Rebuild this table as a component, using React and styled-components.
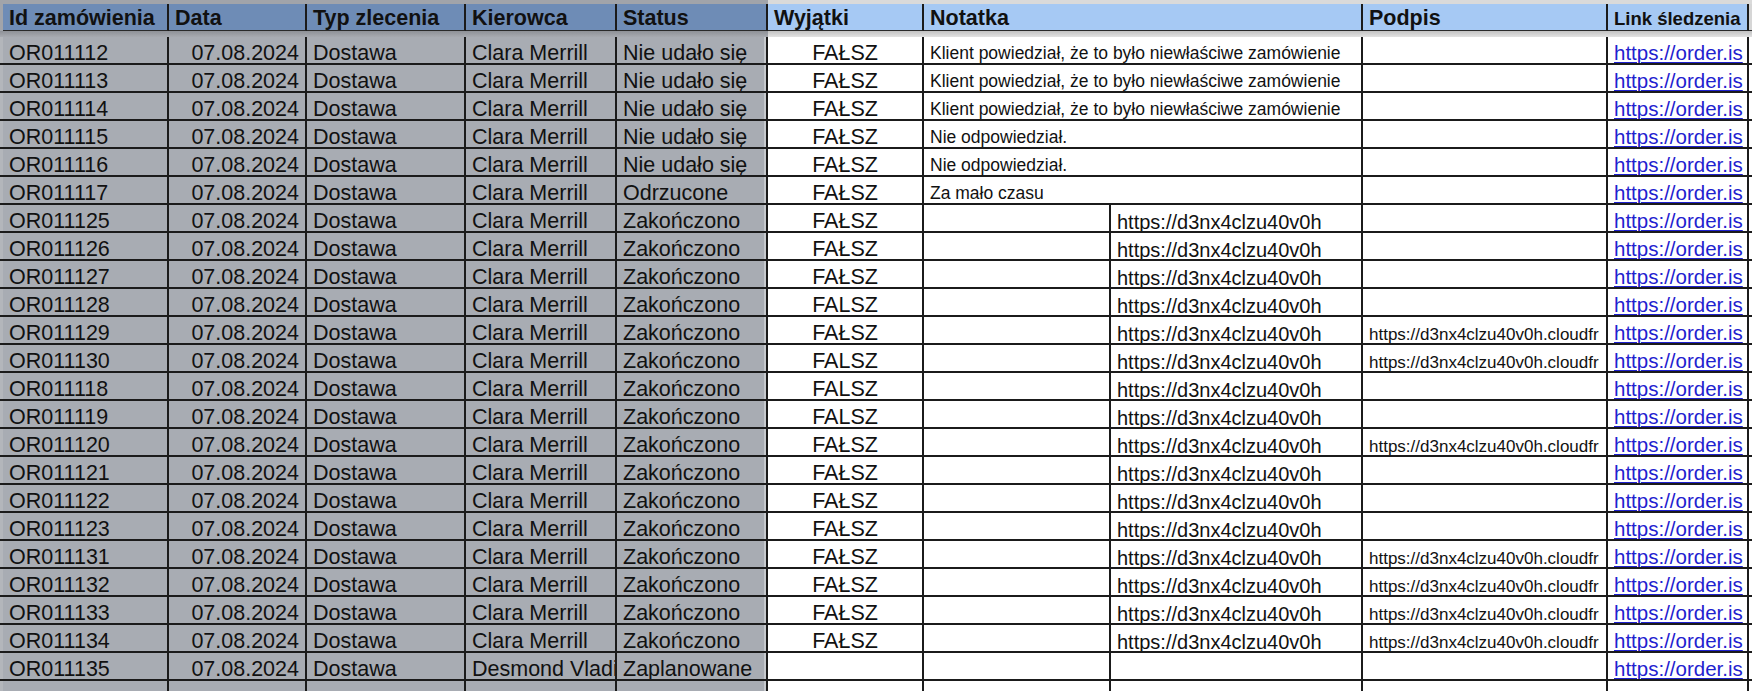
import React from 'react'
import styled, { createGlobalStyle } from 'styled-components'

const GlobalStyle = createGlobalStyle`
  html, body {
    margin: 0;
    padding: 0;
    background: #fff;
  }
`

const LINE = '#1b1b1b'

const Sheet = styled.div`
  display: grid;
  grid-template-columns: 3px 166px 138px 159px 151px 151px 156px 187px 252px 245px 141px 1fr;
  grid-template-rows: 4px 27px 6px;
  grid-auto-rows: 28px;
  width: 1752px;
  height: 691px;
  overflow: hidden;
  font-family: "Liberation Sans", Arial, sans-serif;
  color: #111;
`

const Band = styled.div`
  grid-column: span ${p => p.$span};
  background: ${p => p.$dim ? '#a1a4aa' : '#dadada'};
`

const Divider = styled.div`
  grid-column: span ${p => p.$span};
  background: ${p => p.$dim
    ? 'linear-gradient(#8e9197, #a7aab0)'
    : 'linear-gradient(#c2c2c2, #e2e2e2)'};
`

const HeadCell = styled.div`
  display: flex;
  align-items: flex-end;
  grid-column: span ${p => p.$span || 1};
  min-width: 0;
  overflow: hidden;
  white-space: nowrap;
  padding: 0 6px 2px;
  font-size: ${p => p.$size || 21.5}px;
  font-weight: 700;
  line-height: 0.9;
  background: ${p => p.$dim ? '#6e8cb6' : '#a6c9f4'};
  border-right: 2px solid ${LINE};
  border-bottom: 1px solid #2a2a2a;
`

const Gutter = styled.div`
  background: ${p => p.$dim ? '#b3b6bb' : '#e4e4e4'};
  border-bottom: 2px solid ${LINE};
`

const Tail = styled.div`
  background: ${p => p.$head ? '#d6d6d6' : '#fff'};
  border-bottom: ${p => p.$head ? '1px solid #2a2a2a' : `2px solid ${LINE}`};
`

const justify = { left: 'flex-start', right: 'flex-end', center: 'center' }

const Cell = styled.div`
  display: flex;
  align-items: flex-end;
  justify-content: ${p => justify[p.$align || 'left']};
  grid-column: span ${p => p.$span || 1};
  min-width: 0;
  overflow: hidden;
  white-space: nowrap;
  padding: 0 6px ${p => p.$lift || 0}px;
  font-size: ${p => p.$size || 21.5}px;
  line-height: 0.9;
  background: ${p => p.$dim ? '#a8acb3' : '#fff'};
  border-right: 2px solid ${LINE};
  border-bottom: 2px solid ${LINE};
  box-shadow: ${p => p.$edge ? 'inset -2px 0 0 rgba(255,255,255,0.35)' : 'none'};
`

const Link = styled.a`
  color: #1f22cf;
  text-decoration: underline;
  text-decoration-thickness: 1px;
  text-underline-offset: 2px;
`

const KLIENT = 'Klient powiedział, że to było niewłaściwe zamówienie'
const NIE = 'Nie odpowiedział.'
const URL = 'https://d3nx4clzu40v0h'
const SIGN = 'https://d3nx4clzu40v0h.cloudfr'

const rows = [
  { id: 'OR011112', status: 'Nie udało się', exc: 'FAŁSZ', note: KLIENT },
  { id: 'OR011113', status: 'Nie udało się', exc: 'FAŁSZ', note: KLIENT },
  { id: 'OR011114', status: 'Nie udało się', exc: 'FAŁSZ', note: KLIENT },
  { id: 'OR011115', status: 'Nie udało się', exc: 'FAŁSZ', note: NIE },
  { id: 'OR011116', status: 'Nie udało się', exc: 'FAŁSZ', note: NIE },
  { id: 'OR011117', status: 'Odrzucone', exc: 'FAŁSZ', note: 'Za mało czasu' },
  { id: 'OR011125', status: 'Zakończono', exc: 'FAŁSZ', url: URL },
  { id: 'OR011126', status: 'Zakończono', exc: 'FAŁSZ', url: URL },
  { id: 'OR011127', status: 'Zakończono', exc: 'FAŁSZ', url: URL },
  { id: 'OR011128', status: 'Zakończono', exc: 'FALSZ', url: URL },
  { id: 'OR011129', status: 'Zakończono', exc: 'FAŁSZ', url: URL, sign: SIGN },
  { id: 'OR011130', status: 'Zakończono', exc: 'FALSZ', url: URL, sign: SIGN },
  { id: 'OR011118', status: 'Zakończono', exc: 'FALSZ', url: URL },
  { id: 'OR011119', status: 'Zakończono', exc: 'FALSZ', url: URL },
  { id: 'OR011120', status: 'Zakończono', exc: 'FAŁSZ', url: URL, sign: SIGN },
  { id: 'OR011121', status: 'Zakończono', exc: 'FAŁSZ', url: URL },
  { id: 'OR011122', status: 'Zakończono', exc: 'FAŁSZ', url: URL },
  { id: 'OR011123', status: 'Zakończono', exc: 'FAŁSZ', url: URL },
  { id: 'OR011131', status: 'Zakończono', exc: 'FAŁSZ', url: URL, sign: SIGN },
  { id: 'OR011132', status: 'Zakończono', exc: 'FAŁSZ', url: URL, sign: SIGN },
  { id: 'OR011133', status: 'Zakończono', exc: 'FAŁSZ', url: URL, sign: SIGN },
  { id: 'OR011134', status: 'Zakończono', exc: 'FAŁSZ', url: URL, sign: SIGN },
  { id: 'OR011135', driver: 'Desmond Vladi', status: 'Zaplanowane' }
]

function OrderRow ({ row }) {
  const { id, driver = 'Clara Merrill', status, exc, note, url, sign } = row
  return (
    <>
      <Gutter $dim />
      <Cell $dim>{id}</Cell>
      <Cell $dim $align='right'>07.08.2024</Cell>
      <Cell $dim>Dostawa</Cell>
      <Cell $dim>{driver}</Cell>
      <Cell $dim $edge>{status}</Cell>
      <Cell $align='center'>{exc}</Cell>
      {note
        ? <Cell $span={2} $size={17.5} $lift={1}>{note}</Cell>
        : <>
          <Cell />
          <Cell $size={20}>{url}</Cell>
        </>}
      <Cell $size={17} $lift={1}>{sign}</Cell>
      <Cell $size={20.5} $lift={1}><Link href='#'>https://order.is</Link></Cell>
      <Tail />
    </>
  )
}

function BlankRow () {
  return (
    <>
      <Gutter $dim />
      <Cell $dim />
      <Cell $dim />
      <Cell $dim />
      <Cell $dim />
      <Cell $dim $edge />
      <Cell />
      <Cell />
      <Cell />
      <Cell />
      <Cell />
      <Tail />
    </>
  )
}

export default function App () {
  return (
    <>
      <GlobalStyle />
      <Sheet>
        <Band $dim $span={6} />
        <Band $span={6} />

        <Band $dim $span={1} />
        <HeadCell $dim>Id zamówienia</HeadCell>
        <HeadCell $dim>Data</HeadCell>
        <HeadCell $dim>Typ zlecenia</HeadCell>
        <HeadCell $dim>Kierowca</HeadCell>
        <HeadCell $dim>Status</HeadCell>
        <HeadCell>Wyjątki</HeadCell>
        <HeadCell $span={2}>Notatka</HeadCell>
        <HeadCell>Podpis</HeadCell>
        <HeadCell $size={18.5}>Link śledzenia</HeadCell>
        <Tail $head />

        <Divider $dim $span={6} />
        <Divider $span={6} />

        {rows.map(row => <OrderRow key={row.id} row={row} />)}
        <BlankRow />
      </Sheet>
    </>
  )
}
